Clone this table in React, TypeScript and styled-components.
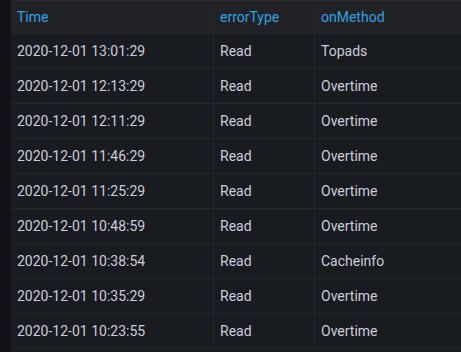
import React from "react";
import styled, { createGlobalStyle } from "styled-components";

const Global = createGlobalStyle`
  html, body { margin: 0; padding: 0; background: #111217; }
  body { font-family: Roboto, "Liberation Sans", sans-serif; }
`;

const Page = styled.div`
  display: flex;
  width: 461px;
  height: 352px;
  overflow: hidden;
  background: #111217;
`;

const Gutter = styled.div`
  width: 11px;
  flex: none;
  background: #111217;
`;

const Table = styled.div`
  flex: 1;
  display: grid;
  grid-template-columns: 203px 101px 1fr;
  grid-auto-rows: 35px;
  grid-template-rows: 34px;
  background: #181b1f;
  align-content: start;
`;

const Cell = styled.div<{ $head?: boolean; $last?: boolean }>`
  box-sizing: border-box;
  display: flex;
  align-items: center;
  padding: 0 6px 1px;
  font-size: 14px;
  white-space: nowrap;
  color: ${(p) => (p.$head ? "#33a2e5" : "#ccccdc")};
  background: ${(p) => (p.$head ? "#202226" : "#181b1f")};
  border-bottom: 1px solid #25272b;
  border-right: ${(p) => (p.$last ? "none" : "1px solid #25272b")};
  border-top: ${(p) => (p.$head ? "1px solid #2a2c31" : "none")};
`;

const rows: [string, string, string][] = [
  ["2020-12-01 13:01:29", "Read", "Topads"],
  ["2020-12-01 12:13:29", "Read", "Overtime"],
  ["2020-12-01 12:11:29", "Read", "Overtime"],
  ["2020-12-01 11:46:29", "Read", "Overtime"],
  ["2020-12-01 11:25:29", "Read", "Overtime"],
  ["2020-12-01 10:48:59", "Read", "Overtime"],
  ["2020-12-01 10:38:54", "Read", "Cacheinfo"],
  ["2020-12-01 10:35:29", "Read", "Overtime"],
  ["2020-12-01 10:23:55", "Read", "Overtime"],
];

export default function App() {
  return (
    <>
      <Global />
      <Page>
        <Gutter />
        <Table>
          <Cell $head>Time</Cell>
          <Cell $head>errorType</Cell>
          <Cell $head $last>onMethod</Cell>
          {rows.map((r, i) => (
            <React.Fragment key={i}>
              <Cell>{r[0]}</Cell>
              <Cell>{r[1]}</Cell>
              <Cell $last>{r[2]}</Cell>
            </React.Fragment>
          ))}
        </Table>
      </Page>
    </>
  );
}
